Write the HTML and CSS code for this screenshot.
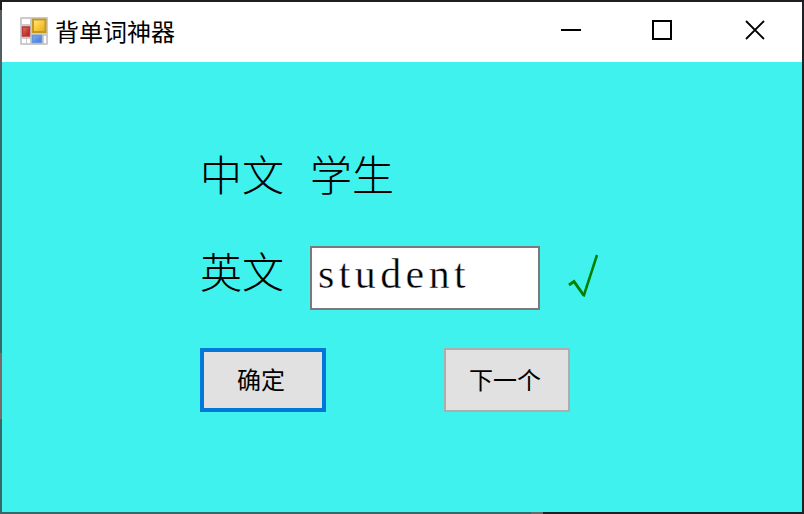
FILE: index.html
```html
<!DOCTYPE html>
<html lang="zh-CN">
<head>
<meta charset="utf-8">
<title>背单词神器</title>
<link rel="stylesheet" href="styles.css">
</head>
<body>
<div class="window">
  <header class="titlebar">
    <svg class="app-icon" viewBox="0 0 30 30">
      <defs>
        <linearGradient id="gold" x1="0" y1="0" x2="1" y2="1"><stop offset="0" stop-color="#ffe795"/><stop offset=".5" stop-color="#fbca3c"/><stop offset="1" stop-color="#e0a91d"/></linearGradient>
        <linearGradient id="red" x1="0" y1="0" x2="1" y2="1"><stop offset="0" stop-color="#e87568"/><stop offset="1" stop-color="#a81512"/></linearGradient>
        <linearGradient id="blue" x1="0" y1="0" x2="1" y2="1"><stop offset="0" stop-color="#83b2fa"/><stop offset="1" stop-color="#3a75dc"/></linearGradient>
      </defs>
      <rect x="1" y="1" width="28" height="28" rx="1" fill="#cbcbcb"/>
      <path d="M3 3h8v5H3zM3 23h4v4H3zM8 23h3v4H8zM25 20h2v7h-2z" fill="#fff"/>
      <rect x="14" y="3.500" width="12.500" height="12.500" fill="url(#gold)" stroke="#c29a22" stroke-width="2"/>
      <rect x="3.500" y="11" width="7" height="9" fill="url(#red)" stroke="#b83a32" stroke-width="1.500"/>
      <rect x="13.500" y="19.500" width="9" height="7" fill="url(#blue)" stroke="#6b93d8" stroke-width="1.500"/>
    </svg>
    <span class="title">背单词神器</span>
    <svg class="controls" viewBox="0 0 208 22" fill="none" stroke="#000" stroke-width="2">
      <path d="M1 11h20"/>
      <path d="M93 2h18v18H93z"/>
      <path d="M186 2l18 18M204 2l-18 18" stroke-width="1.800"/>
    </svg>
  </header>
  <main class="form">
    <div class="row word">
      <span class="label">中文</span>
      <span class="value">学生</span>
    </div>
    <div class="row answer">
      <span class="label">英文</span>
      <input class="field" type="text" value="student" spellcheck="false">
      <svg class="mark" viewBox="0 0 32 46" fill="none" stroke="#008000">
        <path d="M1 31L6 27.500L15.500 41" stroke-width="3"/>
        <path d="M15.500 42.500L29 1" stroke-width="2.500"/>
      </svg>
    </div>
    <div class="row actions">
      <button class="btn primary">确定</button>
      <button class="btn">下一个</button>
    </div>
  </main>
</div>
</body>
</html>
```
FILE: styles.css
```css
* { box-sizing: border-box; }

body {
  margin: 0;
  font-family: "Noto Sans CJK SC", sans-serif;
  color: #000;
}

.window {
  width: 804px;
  height: 514px;
  padding: 2px;
  overflow: hidden;
  background:
    linear-gradient(#1f1f1f, #1f1f1f) 0 0 / 804px 2px no-repeat,
    linear-gradient(#1f1f24, #1f1f24) 802px 0 / 2px 514px no-repeat,
    linear-gradient(90deg, #356867 531px, #686868 531px 543px, #1f1f24 543px) 0 512px / 804px 2px no-repeat,
    linear-gradient(#1f1f1f 10px, #565d61 10px 68px, #356867 68px 353px, #7b6868 353px 419px, #356867 419px);
}

.titlebar {
  display: flex;
  align-items: center;
  height: 60px;
  padding: 0 34px 2px 17px;
  background: #fff;
}

.app-icon { width: 30px; height: 30px; }

.title {
  margin-left: 6px;
  font-size: 24px;
  line-height: 30px;
  font-weight: 400;
}

.controls {
  width: 208px;
  height: 22px;
  margin: 0 0 2px auto;
}

.form {
  height: 450px;
  padding: 81px 0 0 198px;
  background: #40f2ee;
}

.row { display: flex; }

.label, .value {
  font-size: 42px;
  line-height: 60px;
  font-weight: 300;
}

.label { width: 110px; }

.answer { margin-top: 42px; align-items: center; height: 66px; }
.answer .label { padding-bottom: 16px; }

.field {
  width: 230px;
  height: 64px;
  padding: 0 0 8px 6px;
  border: 2px solid #7a7a7a;
  border-radius: 0;
  outline: none;
  background: #fff;
  color: #000;
  font: 42px "Liberation Serif", serif;
  letter-spacing: 4.400px;
  -webkit-text-stroke: 0.400px #fff;
}

.mark {
  width: 32px;
  height: 46px;
  margin: 0 0 3px 28px;
}

.actions { margin-top: 37px; gap: 118px; }

.btn {
  width: 126px;
  height: 64px;
  padding: 0 4px 3px 0;
  border: 2px solid #adadad;
  background: #e1e1e1;
  color: #000;
  font: 400 24px "Noto Sans CJK SC", sans-serif;
}

.primary { border: 4px solid #0078d7; }
```
